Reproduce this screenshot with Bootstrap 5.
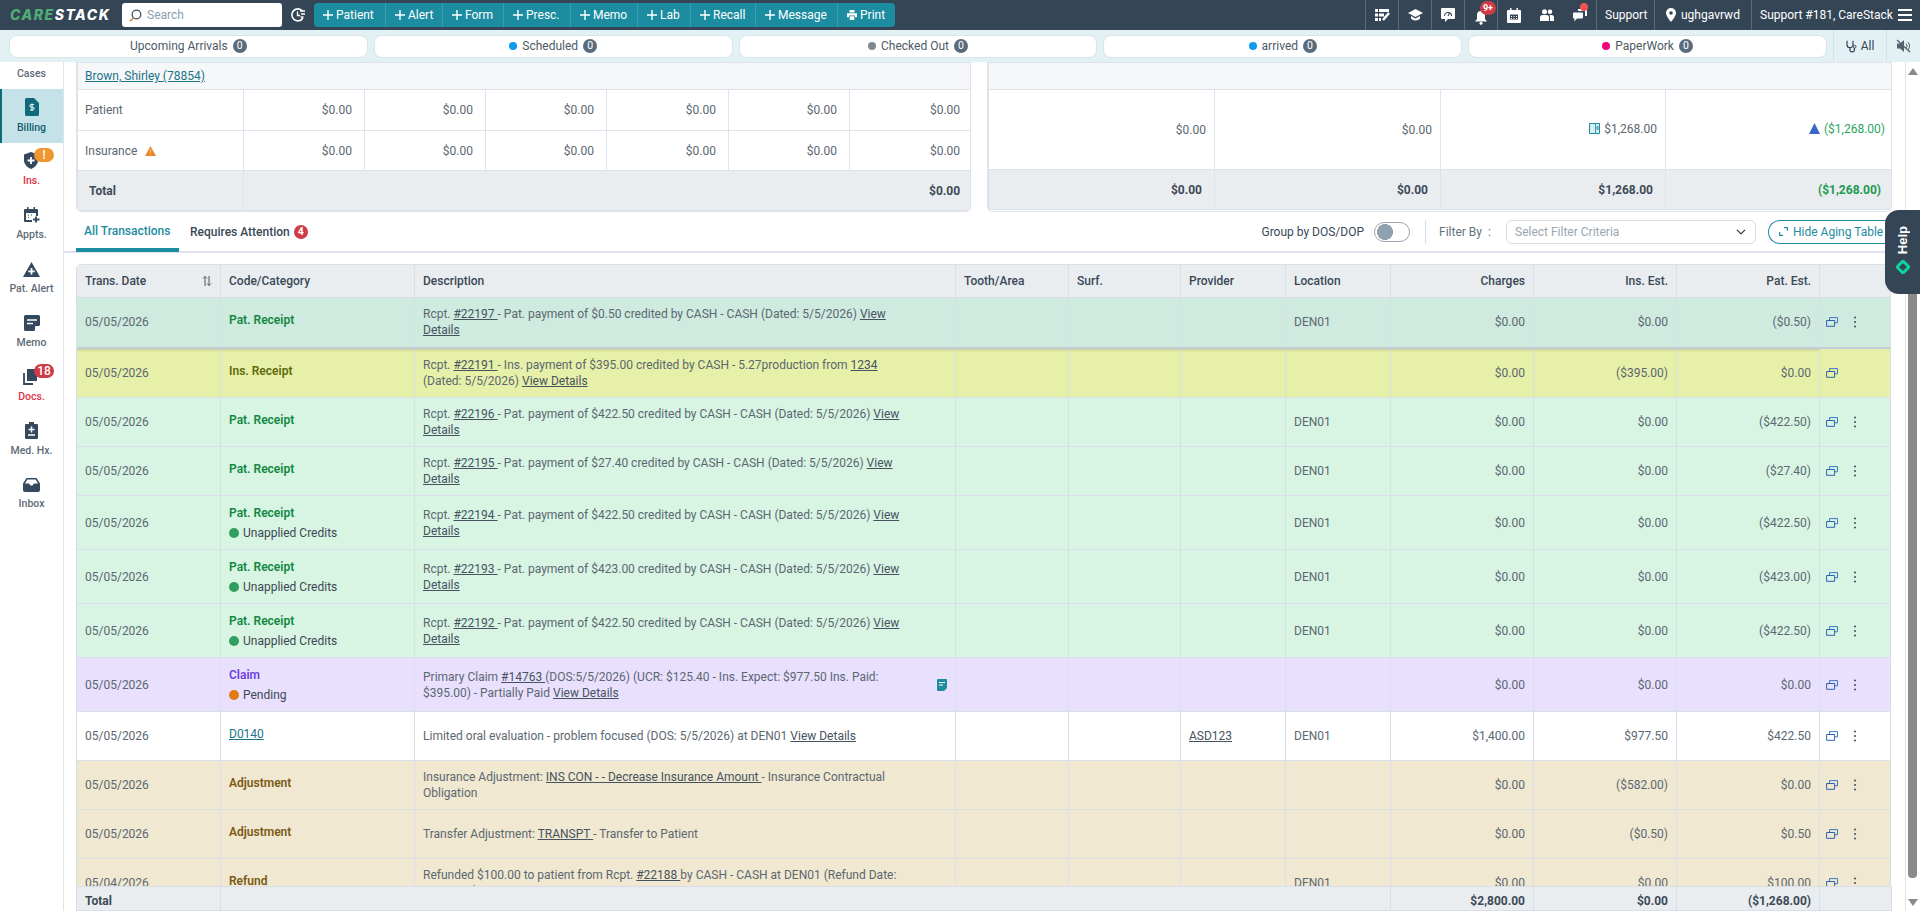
<!DOCTYPE html>
<html lang="en">
<head>
<meta charset="utf-8">
<title>Billing</title>
<link href="https://cdn.jsdelivr.net/npm/bootstrap@5.3.0/dist/css/bootstrap.min.css" rel="stylesheet">
<style>
html,body{height:911px;overflow:hidden}
body{font-family:Roboto,"Liberation Sans",sans-serif;font-size:12px;line-height:16px;color:#5b6771;background:#fff}
svg{display:block;flex:none}
.tbar{height:30px;background:#344556;color:#fff;flex:none}
.brand{width:122px;padding-left:10px;font-family:Inter,"Liberation Sans",sans-serif;font-style:italic;font-weight:800;font-size:14px;letter-spacing:1.5px;color:#fff;white-space:nowrap}
.brand b{color:#4fae74;font-weight:800}
.srch{width:160px;height:24px;background:#fff;border-radius:3px;padding-left:7px;gap:5px}
.srch input{border:0;outline:0;padding:0;width:120px;font-size:12px;background:transparent;height:20px}
.srch input::placeholder{color:#8ba0b4}
.clk{width:32px}
.qa{height:24px;background:#1c8ca1;border-radius:4px;width:581px}
.qa span{height:24px;border-right:1px solid #3a9caf;gap:3px;padding-left:9px;white-space:nowrap}
.qa span:last-child{border:0}
.tri{height:30px;width:33px;border-left:1px solid #5c6b79;position:relative}
.tri.nb{border-left:0}
.tx{height:30px;border-left:1px solid #5c6b79;padding:0 8px;white-space:nowrap;gap:5px}
.nbadge{position:absolute;top:1px;left:15px;height:14px;min-width:16px;border-radius:8px;background:#cf3b45;font-size:9px;line-height:14px;font-weight:700;text-align:center;color:#fff}
.ndot{position:absolute;top:3px;right:8px;width:8px;height:8px;border-radius:50%;background:#ef5350}
.sbar{height:32px;background:#e3f1f5;flex:none;padding-left:9px}
.pill{height:23px;flex:1 1 0;background:#fff;border:1px solid #d6e6eb;border-radius:8px;margin-right:6px;gap:5px;color:#4d5a66}
.pill:last-of-type{margin-right:5px}
.dt{width:8px;height:8px;border-radius:50%;flex:none}
.cnt{width:14px;height:14px;border-radius:50%;background:#5b6b7e;color:#fff;font-size:10.5px;line-height:14px;text-align:center}
.sbx{height:32px;border-left:1px solid #cfe3e9;gap:4px;color:#344556}
.side{width:64px;border-right:1px solid #dde3ec;flex:none;background:#fff}
.side .cs{height:27px;text-align:center;font-size:10.5px;line-height:24px;font-weight:500;color:#5d6b78}
.nvi{height:54px;display:flex;flex-direction:column;align-items:center;padding-top:9px;position:relative;font-size:10.5px;font-weight:500;color:#5d6b78;gap:5px;line-height:14px;white-space:nowrap}
.nvi.on{background:#c5e2e9;border-left:2px solid #0f6b7c;color:#0f5f70;padding-right:2px}
.nvi.red{color:#dc3545}
.nb2{position:absolute;top:5px;left:34px;width:20px;height:14px;border-radius:7px;color:#fff;font-size:12px;line-height:14px;text-align:center;font-weight:500}
.mn{min-width:0}
.sumw{padding:0 13px 0 12px;gap:16px;flex:none}
.sbox{border:1px solid #dde3ea;border-top:0;border-radius:0 0 5px 5px;overflow:hidden}
.sbox.l{width:895px}.sbox.r{width:905px}
.stb{table-layout:fixed;--bs-table-border-color:#dde3ea;--bs-table-color:#5b6771;color:#5b6771}
.stb td{padding:0 8px;vertical-align:middle;font-size:12px;text-align:right}
.stb td.nm{text-align:left}
.l .stb td{padding-right:12px}
.l .stb td.nm{padding-left:7px}
.l .stb td.ttl{padding-left:11px}
.stb tr.hd td{height:27px;--bs-table-bg:#f5f7f9}
.stb tr.tt td{--bs-table-bg:#e9edf0;font-weight:700;color:#3d4a57}
.r .stb tr.tt td{padding-right:12px}
.lnk{color:#1c7488}
.gr{color:#2aa561}
.tabs{height:41px;border-bottom:2px solid #dfe4ec;padding:0 13px 0 12px;flex:none}
.tb1{height:40px;display:flex;align-items:center;padding:0 8px;font-weight:500;color:#1c8ca1;border-bottom:4px solid #1c8ca1;margin-bottom:-1px;padding-top:1px;width:103px}
.tb2{padding-left:11px;font-weight:500;color:#3a4856;gap:4px}
.rb{width:14px;height:14px;border-radius:50%;background:#cf3b45;color:#fff;font-size:10.5px;line-height:14px;text-align:center;font-weight:700}
.grp{color:#3a4856;margin-top:1px}
.gsw{width:36px!important;height:20px;margin:0 0 0 10px!important;background:radial-gradient(circle 8px at 10px 50%,#8fa0ae 98%,transparent) #fff!important;border:1px solid #9aa7b2;border-radius:10px!important;float:none}
.vsep{width:1px;height:24px;background:#d8dfe6;margin:0 13px 0 15px}
.flab{width:67px;white-space:nowrap;color:#66727d}
.fsel{width:250px;height:24px;font-size:12px;padding:0 8px;min-height:0;color:#9aa6b2;border-color:#d6dde4;background-size:12px 10px;background-position:right 8px center;line-height:22px}
.hbtn{width:124px;height:24px;margin-left:12px;padding:0 0 0 10px;font-size:12px;line-height:22px;border:1px solid #1c8ca1;border-radius:12px 0 0 12px;border-right:0;color:#1c8ca1;gap:5px;white-space:nowrap;background:#fff;text-align:left;overflow:hidden}
.scw{padding:11px 13px 0 12px;min-height:0;overflow:hidden}
.tbw{border-radius:5px 5px 0 0;overflow:hidden;border:1px solid #d9dfe8;border-bottom:0;width:1815px}
.mt{table-layout:fixed;width:1815px;margin:-1px 0 0 -1px;--bs-table-border-color:#d9dfe8;color:#5b6771}
.mt>*>tr>*{padding:0 8px;vertical-align:middle;font-size:12px;font-weight:400;color:#5b6771}
.mt th{height:33px;--bs-table-bg:#e9edf0;font-weight:500!important;color:#3a4856!important}
.mt .ar{text-align:right}
.mt a{color:#46535f}
.r50>td{height:50px}.r49>td{height:49px}.r54>td{height:54px}
.cg{--bs-table-bg:#cfeadf}.cy{--bs-table-bg:#e6f0a8}.cl{--bs-table-bg:#d8f5e4}.cp{--bs-table-bg:#e8e0fd}.cw{--bs-table-bg:#fff}.ct{--bs-table-bg:#f0e8d0}
.cg>td{border-bottom:2px solid #c5cdd4}
.cy>td:not(:last-child){box-shadow:inset 0 4px 3px -3px rgba(60,60,60,.22)}
.cd{font-weight:600;margin-bottom:4px}
.cd.g{color:#12883f}.cd.y{color:#5f6a0a}.cd.v{color:#6d3fe0}.cd.b{color:#7a5a16}
.mt a.cd{color:#1c7488;font-weight:400;display:inline-block}
.st{gap:4px;color:#3c4752}
.st i{width:10px;height:10px;border-radius:50%;display:block}
.txt{width:478px}
.acts{gap:15px;margin-left:-2px}
.ft{width:1815px;table-layout:fixed;margin:0 13px 0 12px;--bs-table-border-color:#d9dfe8;flex:none}
.ft td{height:24px;padding:5px 8px 0;--bs-table-bg:#e9edf0;font-weight:700;color:#3d4a57;vertical-align:middle;border-bottom:0;border-top:0}
.ft td.ar{text-align:right}
.strk{width:15px;border-left:1px solid #dde3ec;padding:6px 3px 5px 2px;flex:none}
.thumb{width:9px;height:657px;background:#8a8a8a;border-radius:0 0 4px 4px;margin-top:auto;margin-bottom:21px}
.up{width:0;height:0;border:5px solid transparent;border-top:0;border-bottom:7px solid #8a8a8a;margin-left:0}
.dn{width:0;height:0;border:5px solid transparent;border-bottom:0;border-top:7px solid #8a8a8a}
.help{position:absolute;left:1885px;top:210px;width:35px;height:84px;background:#344556;border-radius:14px 0 0 14px;color:#fff;gap:6px;padding-top:16px}
.help span{writing-mode:vertical-rl;transform:rotate(180deg);font-family:"Liberation Sans",sans-serif;font-weight:700;font-size:13px;line-height:16px}
</style>
</head>
<body class="d-flex flex-column position-relative">
<svg width="0" height="0" class="position-absolute">
<defs>
<symbol id="pl" viewBox="0 0 10 10"><path d="M5 0v10M0 5h10" stroke="#fff" stroke-width="1.4"/></symbol>
<symbol id="win" viewBox="0 0 12 10"><path d="M3.500 3V.6h8v5.200H9" fill="none" stroke="#3b79c4" stroke-width="1"/><path d="M.6 3.500h8v5.800h-8z" fill="none" stroke="#2f62b0" stroke-width="1"/></symbol>
<symbol id="keb" viewBox="0 0 4 12"><circle cx="2" cy="1.5" r="1.1" fill="#4b5a68"/><circle cx="2" cy="6" r="1.1" fill="#4b5a68"/><circle cx="2" cy="10.5" r="1.1" fill="#4b5a68"/></symbol>
</defs>
</svg>

<header class="tbar d-flex align-items-center">
  <div class="brand"><b>CARE</b>STACK</div>
  <div class="srch d-flex align-items-center">
    <svg width="13" height="13" viewBox="0 0 13 13"><circle cx="7.5" cy="5.5" r="4.3" fill="none" stroke="#3e4f5f" stroke-width="1.3"/><path d="M4.5 8.7L1 12.3" stroke="#c48a3a" stroke-width="1.6"/></svg>
    <input type="text" placeholder="Search" aria-label="Search">
  </div>
  <div class="clk d-flex justify-content-center">
    <svg width="14" height="14" viewBox="0 0 14 14"><path d="M11.5 3A6 6 0 1 0 12 10" fill="none" stroke="#fff" stroke-width="1.6"/><path d="M6.500 3.500v4h2.500M9 3h5M10 6h4M9.500 9h3" fill="none" stroke="#fff" stroke-width="1.300"/></svg>
  </div>
  <div class="qa d-flex align-items-center">
    <span class="d-flex align-items-center" style="width:72px"><svg width="10" height="10"><use href="#pl"/></svg>Patient</span>
    <span class="d-flex align-items-center" style="width:57px"><svg width="10" height="10"><use href="#pl"/></svg>Alert</span>
    <span class="d-flex align-items-center" style="width:61px"><svg width="10" height="10"><use href="#pl"/></svg>Form</span>
    <span class="d-flex align-items-center" style="width:67px"><svg width="10" height="10"><use href="#pl"/></svg>Presc.</span>
    <span class="d-flex align-items-center" style="width:67px"><svg width="10" height="10"><use href="#pl"/></svg>Memo</span>
    <span class="d-flex align-items-center" style="width:53px"><svg width="10" height="10"><use href="#pl"/></svg>Lab</span>
    <span class="d-flex align-items-center" style="width:65px"><svg width="10" height="10"><use href="#pl"/></svg>Recall</span>
    <span class="d-flex align-items-center" style="width:82px"><svg width="10" height="10"><use href="#pl"/></svg>Message</span>
    <span class="d-flex align-items-center" style="width:57px"><svg width="10" height="10" viewBox="0 0 10 10"><path d="M2.500 0h5v2.500h-5zM0 3.200h10v4H8V5.600H2v1.600H0zM2.700 6.300h4.600V10H2.700z" fill="#fff"/></svg>Print</span>
  </div>
  <div class="ms-auto d-flex align-items-center">
    <div class="tri d-flex align-items-center justify-content-center"><svg width="15" height="12" viewBox="0 0 15 12"><path d="M0 0h3v3H0zM4 0h10v3H4zM0 4.500h3v3H0zM0 9h3v3H0zM4 4.500h5v3H4zM4 9h2v3H4z" fill="#fff"/><path d="M14 4L8 11" stroke="#fff" stroke-width="2.500"/></svg></div>
    <div class="tri d-flex align-items-center justify-content-center"><svg width="15" height="13" viewBox="0 0 15 13"><path d="M7.500 0L15 4 7.500 8 0 4z" fill="#fff"/><path d="M3 7v2.500c1.500 2.500 7.500 2.500 9 0V7L7.500 9.500z" fill="#fff"/></svg></div>
    <div class="tri d-flex align-items-center justify-content-center"><svg width="14" height="14" viewBox="0 0 14 14"><path d="M1 0h12a1 1 0 0 1 1 1v9a1 1 0 0 1-1 1H7l-3 3v-3H1a1 1 0 0 1-1-1V1a1 1 0 0 1 1-1z" fill="#fff"/><path d="M3.500 8a3.500 3.500 0 1 1 7 0M7 8l1.500-3" fill="none" stroke="#344556" stroke-width="1.100"/></svg></div>
    <div class="tri d-flex align-items-center justify-content-center"><svg width="14" height="15" viewBox="0 0 14 15" class="mt-1"><path d="M7 1a4 4 0 0 1 4 4v4l2 2.500H1L3 9V5a4 4 0 0 1 4-4z" fill="#fff"/><circle cx="7" cy="13.300" r="1.500" fill="#fff"/></svg><span class="nbadge">9+</span></div>
    <div class="tri d-flex align-items-center justify-content-center"><svg width="14" height="15" viewBox="0 0 14 15"><path d="M1 2h12a1 1 0 0 1 1 1v11a1 1 0 0 1-1 1H1a1 1 0 0 1-1-1V3a1 1 0 0 1 1-1zM3 0h1.500v3H3zM9.500 0H11v3H9.500z" fill="#fff"/><path d="M3 6.500h8v5H3z" fill="#344556"/><path d="M4 8h1v1H4zM6.500 8h1v1h-1zM9 8h1v1H9zM4 10h1v1H4zM6.500 10h1v1h-1zM9 10h1v1H9z" fill="#fff"/></svg></div>
    <div class="tri nb d-flex align-items-center justify-content-center"><svg width="14" height="12" viewBox="0 0 14 12"><circle cx="4.500" cy="2.700" r="2.500" fill="#fff"/><circle cx="10" cy="2.700" r="2.300" fill="#fff"/><path d="M0 12V8.500A2.500 2.500 0 0 1 2.500 6h4A2.500 2.500 0 0 1 9 8.500V12zM10 12V8c0-.8-.2-1.400-.6-2H11.500A2.500 2.500 0 0 1 14 8.500V12z" fill="#fff"/></svg></div>
    <div class="tri nb d-flex align-items-center justify-content-center"><svg width="14" height="13" viewBox="0 0 14 13"><path d="M5 0h8a1 1 0 0 1 1 1v6h-2V2H5z" fill="#fff"/><path d="M1 3.500h8a1 1 0 0 1 1 1v4a1 1 0 0 1-1 1H4L1.500 12.500V9.500H1a1 1 0 0 1-1-1v-4a1 1 0 0 1 1-1z" fill="#fff"/></svg><span class="ndot"></span></div>
    <div class="tx d-flex align-items-center" style="width:58px;padding-left:8px">Support</div>
    <div class="tx d-flex align-items-center" style="width:97px;padding-left:11px"><svg width="10" height="14" viewBox="0 0 10 14"><path d="M5 0a5 5 0 0 1 5 5c0 3.300-5 9-5 9S0 8.300 0 5a5 5 0 0 1 5-5z" fill="#fff"/><circle cx="5" cy="5" r="1.800" fill="#344556"/></svg>ughgavrwd</div>
    <div class="tx d-flex align-items-center" style="width:169px"><span>Support #181, CareStack</span><svg width="14" height="12" viewBox="0 0 14 12" class="ms-auto me-1"><path d="M0 1h14M0 6h14M0 11h14" stroke="#fff" stroke-width="1.800"/></svg></div>
  </div>
</header>

<div class="sbar d-flex align-items-center">
  <div class="pill d-flex align-items-center justify-content-center">Upcoming Arrivals <span class="cnt">0</span></div>
  <div class="pill d-flex align-items-center justify-content-center"><i class="dt" style="background:#0d9bf0"></i>Scheduled <span class="cnt">0</span></div>
  <div class="pill d-flex align-items-center justify-content-center"><i class="dt" style="background:#808890"></i>Checked Out <span class="cnt">0</span></div>
  <div class="pill d-flex align-items-center justify-content-center"><i class="dt" style="background:#0d9bf0"></i>arrived <span class="cnt">0</span></div>
  <div class="pill d-flex align-items-center justify-content-center"><i class="dt" style="background:#f0057a"></i>PaperWork <span class="cnt">0</span></div>
  <div class="sbx d-flex align-items-center justify-content-center" style="width:53px"><svg width="11" height="13" viewBox="0 0 11 13"><path d="M1 .7v4a3 3 0 0 0 6 0v-4M4 7.700v2a2.200 2.200 0 0 0 4.400 0V8" fill="none" stroke="#344556" stroke-width="1.200"/><circle cx="8.600" cy="6.700" r="1.400" fill="none" stroke="#344556"/></svg>All</div>
  <div class="sbx d-flex align-items-center justify-content-center" style="width:34px"><svg width="15" height="14" viewBox="0 0 15 14"><path d="M1 4.500h3L8 1v12L4 9.500H1z" fill="#55636f"/><path d="M10 4.500a3.500 3.500 0 0 1 0 5M12 3a6 6 0 0 1 0 8" fill="none" stroke="#55636f"/><path d="M1 1l13 12" stroke="#55636f" stroke-width="1.300"/></svg></div>
</div>

<div class="d-flex flex-grow-1" style="min-height:0">
  <nav class="side">
    <div class="cs">Cases</div>
    <div class="nvi on"><svg width="14" height="18" viewBox="0 0 14 18"><path d="M1.500 0H9l5 5v11.500a1.500 1.500 0 0 1-1.500 1.500h-11A1.500 1.500 0 0 1 0 16.500v-15A1.500 1.500 0 0 1 1.500 0z" fill="#0f6b7c"/><path d="M9 6.500H6.200a1.300 1.300 0 0 0 0 2.700h1.600a1.300 1.300 0 0 1 0 2.700H5M7 5.500v7.500" fill="none" stroke="#fff" stroke-width="1"/></svg>Billing</div>
    <div class="nvi red"><svg width="14" height="17" viewBox="0 0 14 17" style="margin:0 0 0 -2px"><path d="M7 0l7 2.500V8c0 4-3 7.500-7 9-4-1.500-7-5-7-9V2.500z" fill="#34495e"/><path d="M7 5v7M3.500 8.500h7" stroke="#fff" stroke-width="1.800"/></svg>Ins.<span class="nb2" style="background:#f0962e">!</span></div>
    <div class="nvi"><svg width="16" height="16" viewBox="0 0 16 16" style="margin-top:1px"><path d="M1 2h12a1 1 0 0 1 1 1v6h-3v3H8v3H1a1 1 0 0 1-1-1V3a1 1 0 0 1 1-1zM3 0h1.500v3H3zM9.500 0H11v3H9.500z" fill="#34495e"/><path d="M2 6h10v7H2z" fill="#fff"/><path d="M4 7.500h1v1H4zM7 7.500h1v1H7zM4 10h1v1H4z" fill="#34495e"/><path d="M12 9.500v6M9 12.500h6.500" stroke="#34495e" stroke-width="1.800"/></svg>Appts.</div>
    <div class="nvi"><svg width="17" height="15" viewBox="0 0 17 15" style="margin-top:2px"><path d="M8.500 0L17 15H0z" fill="#34495e"/><path d="M8.500 6v6.500M5.300 9.300h6.400" stroke="#fff" stroke-width="1.800"/></svg>Pat. Alert</div>
    <div class="nvi"><svg width="16" height="16" viewBox="0 0 16 16" style="margin-top:1px"><path d="M1.500 0h13A1.500 1.500 0 0 1 16 1.500V10l-6 6H1.500A1.500 1.500 0 0 1 0 14.500v-13A1.500 1.500 0 0 1 1.500 0z" fill="#34495e"/><path d="M3 5h10M3 8.500h6" stroke="#fff" stroke-width="1.500"/><path d="M16 11h-4a1 1 0 0 0-1 1v4z" fill="#fff"/></svg>Memo</div>
    <div class="nvi red"><svg width="14" height="16" viewBox="0 0 14 16" style="margin:1px 0 0 -4px"><path d="M4 0h8l2 2v10H4z" fill="#34495e"/><path d="M1 4v11h9" fill="none" stroke="#34495e" stroke-width="1.800"/></svg>Docs.<span class="nb2" style="background:#cf3b45">18</span></div>
    <div class="nvi"><svg width="13" height="17" viewBox="0 0 13 17"><path d="M1 2h3V0h5v2h3a1 1 0 0 1 1 1v13a1 1 0 0 1-1 1H1a1 1 0 0 1-1-1V3a1 1 0 0 1 1-1z" fill="#34495e"/><path d="M6.500 4.500v6M3.500 7.500h6M3 13h7" stroke="#fff" stroke-width="1.500"/></svg>Med. Hx.</div>
    <div class="nvi"><svg width="17" height="14" viewBox="0 0 17 14" style="margin-top:2px"><path d="M3.500 0h10L17 5.500V12a2 2 0 0 1-2 2H2a2 2 0 0 1-2-2V5.500z" fill="#34495e"/><path d="M4.300 1.500h8.400L15 5.500h-4L9.500 7.500h-2L6 5.500H2z" fill="#fff"/></svg>Inbox</div>
  </nav>

  <main class="mn flex-grow-1 d-flex flex-column">
    <div class="sumw d-flex">
      <div class="sbox l">
        <table class="table table-bordered mb-0 stb">
          <colgroup><col style="width:166px"><col style="width:121px"><col style="width:121px"><col style="width:121px"><col style="width:122px"><col style="width:121px"><col style="width:123px"></colgroup>
          <tr class="hd"><td class="nm" colspan="7"><a href="#" class="lnk">Brown, Shirley (78854)</a></td></tr>
          <tr style="height:41px"><td class="nm">Patient</td><td>$0.00</td><td>$0.00</td><td>$0.00</td><td>$0.00</td><td>$0.00</td><td>$0.00</td></tr>
          <tr style="height:40px"><td class="nm"><span class="d-flex align-items-center gap-2">Insurance <svg width="11" height="10" viewBox="0 0 12 11"><path d="M6 0l6 11H0z" fill="#e8872a"/><path d="M6 3.500v4M6 8.500v1.300" stroke="#f7c98c"/></svg></span></td><td>$0.00</td><td>$0.00</td><td>$0.00</td><td>$0.00</td><td>$0.00</td><td>$0.00</td></tr>
          <tr class="tt" style="height:40px"><td class="nm ttl">Total</td><td colspan="6">$0.00</td></tr>
        </table>
      </div>
      <div class="sbox r">
        <table class="table table-bordered mb-0 stb">
          <colgroup><col style="width:226px"><col style="width:226px"><col style="width:225px"><col style="width:228px"></colgroup>
          <tr class="hd"><td colspan="4"></td></tr>
          <tr style="height:80px"><td>$0.00</td><td>$0.00</td><td><span class="d-inline-flex align-items-center gap-1"><svg width="11" height="11" viewBox="0 0 11 11"><path d="M.5.500h10v10H.5z" fill="#d8eef2" stroke="#1c8ca1"/><path d="M6.500 1v9M8 3.500h1v3H8z" stroke="#1c8ca1" fill="none" stroke-width=".8"/></svg>$1,268.00</span></td><td><span class="d-inline-flex align-items-center gap-1"><svg width="11" height="11" viewBox="0 0 11 11"><path d="M5.500 0L11 11H0z" fill="#3a64c8"/></svg><span class="gr">($1,268.00)</span></span></td></tr>
          <tr class="tt" style="height:40px"><td>$0.00</td><td>$0.00</td><td>$1,268.00</td><td class="gr" style="color:#1f9a52">($1,268.00)</td></tr>
        </table>
      </div>
    </div>

    <div class="tabs d-flex align-items-center">
      <div class="tb1">All Transactions</div>
      <div class="tb2 d-flex align-items-center">Requires Attention <span class="rb">4</span></div>
      <div class="ms-auto d-flex align-items-center">
        <span class="grp">Group by DOS/DOP</span>
        <input class="form-check-input gsw" type="checkbox" role="switch" aria-label="Group by DOS/DOP">
        <span class="vsep"></span>
        <span class="flab">Filter By &nbsp;:</span>
        <select class="form-select fsel" aria-label="Filter"><option>Select Filter Criteria</option></select>
        <button type="button" class="btn hbtn d-flex align-items-center"><svg width="9" height="9" viewBox="0 0 9 9"><path d="M5 .6h3.400V4M4 8.400H.6V5" fill="none" stroke="#1c8ca1" stroke-width="1.100"/></svg>Hide Aging Table</button>
      </div>
    </div>

    <div class="scw flex-grow-1">
      <div class="tbw">
      <table class="table table-bordered mb-0 mt">
        <colgroup><col style="width:144px"><col style="width:194px"><col style="width:541px"><col style="width:113px"><col style="width:112px"><col style="width:105px"><col style="width:105px"><col style="width:143px"><col style="width:143px"><col style="width:143px"><col style="width:72px"></colgroup>
        <thead><tr><th><span class="d-flex align-items-center justify-content-between">Trans. Date <svg width="10" height="12" viewBox="0 0 10 12"><path d="M3 11V1.500M1 3.500l2-2 2 2M7 1v9.500M5 8.500l2 2 2-2" fill="none" stroke="#4a5864"/></svg></span></th><th>Code/Category</th><th>Description</th><th>Tooth/Area</th><th>Surf.</th><th>Provider</th><th>Location</th><th class="ar">Charges</th><th class="ar">Ins. Est.</th><th class="ar">Pat. Est.</th><th></th></tr></thead>
        <tbody>
          <tr class="r50 cg"><td>05/05/2026</td><td><div class="cd g">Pat. Receipt</div></td><td><div class="txt">Rcpt. <a href="#">#22197 </a>- Pat. payment of $0.50 credited by CASH - CASH (Dated: 5/5/2026) <a href="#">View Details</a></div></td><td></td><td></td><td></td><td>DEN01</td><td class="ar">$0.00</td><td class="ar">$0.00</td><td class="ar">($0.50)</td><td><div class="d-flex align-items-center acts"><svg width="12" height="10"><use href="#win"/></svg><svg width="4" height="12"><use href="#keb"/></svg></div></td></tr>
          <tr class="r50 cy"><td>05/05/2026</td><td><div class="cd y">Ins. Receipt</div></td><td><div class="txt">Rcpt. <a href="#">#22191 </a>- Ins. payment of $395.00 credited by CASH - 5.27production from <a href="#">1234</a> (Dated: 5/5/2026) <a href="#">View Details</a></div></td><td></td><td></td><td></td><td></td><td class="ar">$0.00</td><td class="ar">($395.00)</td><td class="ar">$0.00</td><td><div class="d-flex align-items-center acts"><svg width="12" height="10"><use href="#win"/></svg></div></td></tr>
          <tr class="r49 cl"><td>05/05/2026</td><td><div class="cd g">Pat. Receipt</div></td><td><div class="txt">Rcpt. <a href="#">#22196 </a>- Pat. payment of $422.50 credited by CASH - CASH (Dated: 5/5/2026) <a href="#">View Details</a></div></td><td></td><td></td><td></td><td>DEN01</td><td class="ar">$0.00</td><td class="ar">$0.00</td><td class="ar">($422.50)</td><td><div class="d-flex align-items-center acts"><svg width="12" height="10"><use href="#win"/></svg><svg width="4" height="12"><use href="#keb"/></svg></div></td></tr>
          <tr class="r49 cl"><td>05/05/2026</td><td><div class="cd g">Pat. Receipt</div></td><td><div class="txt">Rcpt. <a href="#">#22195 </a>- Pat. payment of $27.40 credited by CASH - CASH (Dated: 5/5/2026) <a href="#">View Details</a></div></td><td></td><td></td><td></td><td>DEN01</td><td class="ar">$0.00</td><td class="ar">$0.00</td><td class="ar">($27.40)</td><td><div class="d-flex align-items-center acts"><svg width="12" height="10"><use href="#win"/></svg><svg width="4" height="12"><use href="#keb"/></svg></div></td></tr>
          <tr class="r54 cl"><td>05/05/2026</td><td><div class="cd g">Pat. Receipt</div><div class="st d-flex align-items-center"><i style="background:#2f9e5f"></i>Unapplied Credits</div></td><td><div class="txt">Rcpt. <a href="#">#22194 </a>- Pat. payment of $422.50 credited by CASH - CASH (Dated: 5/5/2026) <a href="#">View Details</a></div></td><td></td><td></td><td></td><td>DEN01</td><td class="ar">$0.00</td><td class="ar">$0.00</td><td class="ar">($422.50)</td><td><div class="d-flex align-items-center acts"><svg width="12" height="10"><use href="#win"/></svg><svg width="4" height="12"><use href="#keb"/></svg></div></td></tr>
          <tr class="r54 cl"><td>05/05/2026</td><td><div class="cd g">Pat. Receipt</div><div class="st d-flex align-items-center"><i style="background:#2f9e5f"></i>Unapplied Credits</div></td><td><div class="txt">Rcpt. <a href="#">#22193 </a>- Pat. payment of $423.00 credited by CASH - CASH (Dated: 5/5/2026) <a href="#">View Details</a></div></td><td></td><td></td><td></td><td>DEN01</td><td class="ar">$0.00</td><td class="ar">$0.00</td><td class="ar">($423.00)</td><td><div class="d-flex align-items-center acts"><svg width="12" height="10"><use href="#win"/></svg><svg width="4" height="12"><use href="#keb"/></svg></div></td></tr>
          <tr class="r54 cl"><td>05/05/2026</td><td><div class="cd g">Pat. Receipt</div><div class="st d-flex align-items-center"><i style="background:#2f9e5f"></i>Unapplied Credits</div></td><td><div class="txt">Rcpt. <a href="#">#22192 </a>- Pat. payment of $422.50 credited by CASH - CASH (Dated: 5/5/2026) <a href="#">View Details</a></div></td><td></td><td></td><td></td><td>DEN01</td><td class="ar">$0.00</td><td class="ar">$0.00</td><td class="ar">($422.50)</td><td><div class="d-flex align-items-center acts"><svg width="12" height="10"><use href="#win"/></svg><svg width="4" height="12"><use href="#keb"/></svg></div></td></tr>
          <tr class="r54 cp"><td>05/05/2026</td><td><div class="cd v">Claim</div><div class="st d-flex align-items-center"><i style="background:#e07c10"></i>Pending</div></td><td><div class="d-flex align-items-center justify-content-between"><div class="txt">Primary Claim <a href="#">#14763 </a>(DOS:5/5/2026) (UCR: $125.40 - Ins. Expect: $977.50 Ins. Paid: $395.00) - Partially Paid <a href="#">View Details</a></div><svg width="10" height="12" viewBox="0 0 10 12"><path d="M1 0h8a1 1 0 0 1 1 1v8l-3 3H1a1 1 0 0 1-1-1V1a1 1 0 0 1 1-1z" fill="#1c8ca1"/><path d="M2 3.500h6M2 6h4" stroke="#fff"/></svg></div></td><td></td><td></td><td></td><td></td><td class="ar">$0.00</td><td class="ar">$0.00</td><td class="ar">$0.00</td><td><div class="d-flex align-items-center acts"><svg width="12" height="10"><use href="#win"/></svg><svg width="4" height="12"><use href="#keb"/></svg></div></td></tr>
          <tr class="r49 cw"><td>05/05/2026</td><td><a href="#" class="cd">D0140</a></td><td><div class="txt">Limited oral evaluation - problem focused (DOS: 5/5/2026) at DEN01 <a href="#">View Details</a></div></td><td></td><td></td><td><a href="#">ASD123</a></td><td>DEN01</td><td class="ar">$1,400.00</td><td class="ar">$977.50</td><td class="ar">$422.50</td><td><div class="d-flex align-items-center acts"><svg width="12" height="10"><use href="#win"/></svg><svg width="4" height="12"><use href="#keb"/></svg></div></td></tr>
          <tr class="r49 ct"><td>05/05/2026</td><td><div class="cd b">Adjustment</div></td><td><div class="txt">Insurance Adjustment: <a href="#">INS CON - - Decrease Insurance Amount </a>- Insurance Contractual Obligation</div></td><td></td><td></td><td></td><td></td><td class="ar">$0.00</td><td class="ar">($582.00)</td><td class="ar">$0.00</td><td><div class="d-flex align-items-center acts"><svg width="12" height="10"><use href="#win"/></svg><svg width="4" height="12"><use href="#keb"/></svg></div></td></tr>
          <tr class="r49 ct"><td>05/05/2026</td><td><div class="cd b">Adjustment</div></td><td><div class="txt">Transfer Adjustment: <a href="#">TRANSPT </a>- Transfer to Patient</div></td><td></td><td></td><td></td><td></td><td class="ar">$0.00</td><td class="ar">($0.50)</td><td class="ar">$0.50</td><td><div class="d-flex align-items-center acts"><svg width="12" height="10"><use href="#win"/></svg><svg width="4" height="12"><use href="#keb"/></svg></div></td></tr>
          <tr class="r49 ct"><td>05/04/2026</td><td><div class="cd b">Refund</div></td><td><div class="txt">Refunded $100.00 to patient from Rcpt. <a href="#">#22188 </a>by CASH - CASH at DEN01 (Refund Date: 5/5/2026)</div></td><td></td><td></td><td></td><td>DEN01</td><td class="ar">$0.00</td><td class="ar">$0.00</td><td class="ar">$100.00</td><td><div class="d-flex align-items-center acts"><svg width="12" height="10"><use href="#win"/></svg><svg width="4" height="12"><use href="#keb"/></svg></div></td></tr>
        </tbody>
      </table>
      </div>
    </div>
    <table class="table table-bordered mb-0 ft">
      <colgroup><col style="width:144px"><col style="width:1170px"><col style="width:143px"><col style="width:143px"><col style="width:143px"><col style="width:72px"></colgroup>
      <tr><td>Total</td><td></td><td class="ar">$2,800.00</td><td class="ar">$0.00</td><td class="ar">($1,268.00)</td><td></td></tr>
    </table>
  </main>

  <div class="strk d-flex flex-column">
    <div class="up"></div>
    <div class="thumb"></div>
    <div class="dn"></div>
  </div>
</div>

<aside class="help d-flex flex-column align-items-center">
  <span>Help</span>
  <svg width="14" height="14" viewBox="0 0 14 14"><path d="M7 1l6 6-6 6-6-6z" fill="none" stroke="#0bd6a0" stroke-width="3" stroke-linejoin="round"/></svg>
</aside>

<script src="https://cdn.jsdelivr.net/npm/bootstrap@5.3.0/dist/js/bootstrap.bundle.min.js"></script>
</body>
</html>
